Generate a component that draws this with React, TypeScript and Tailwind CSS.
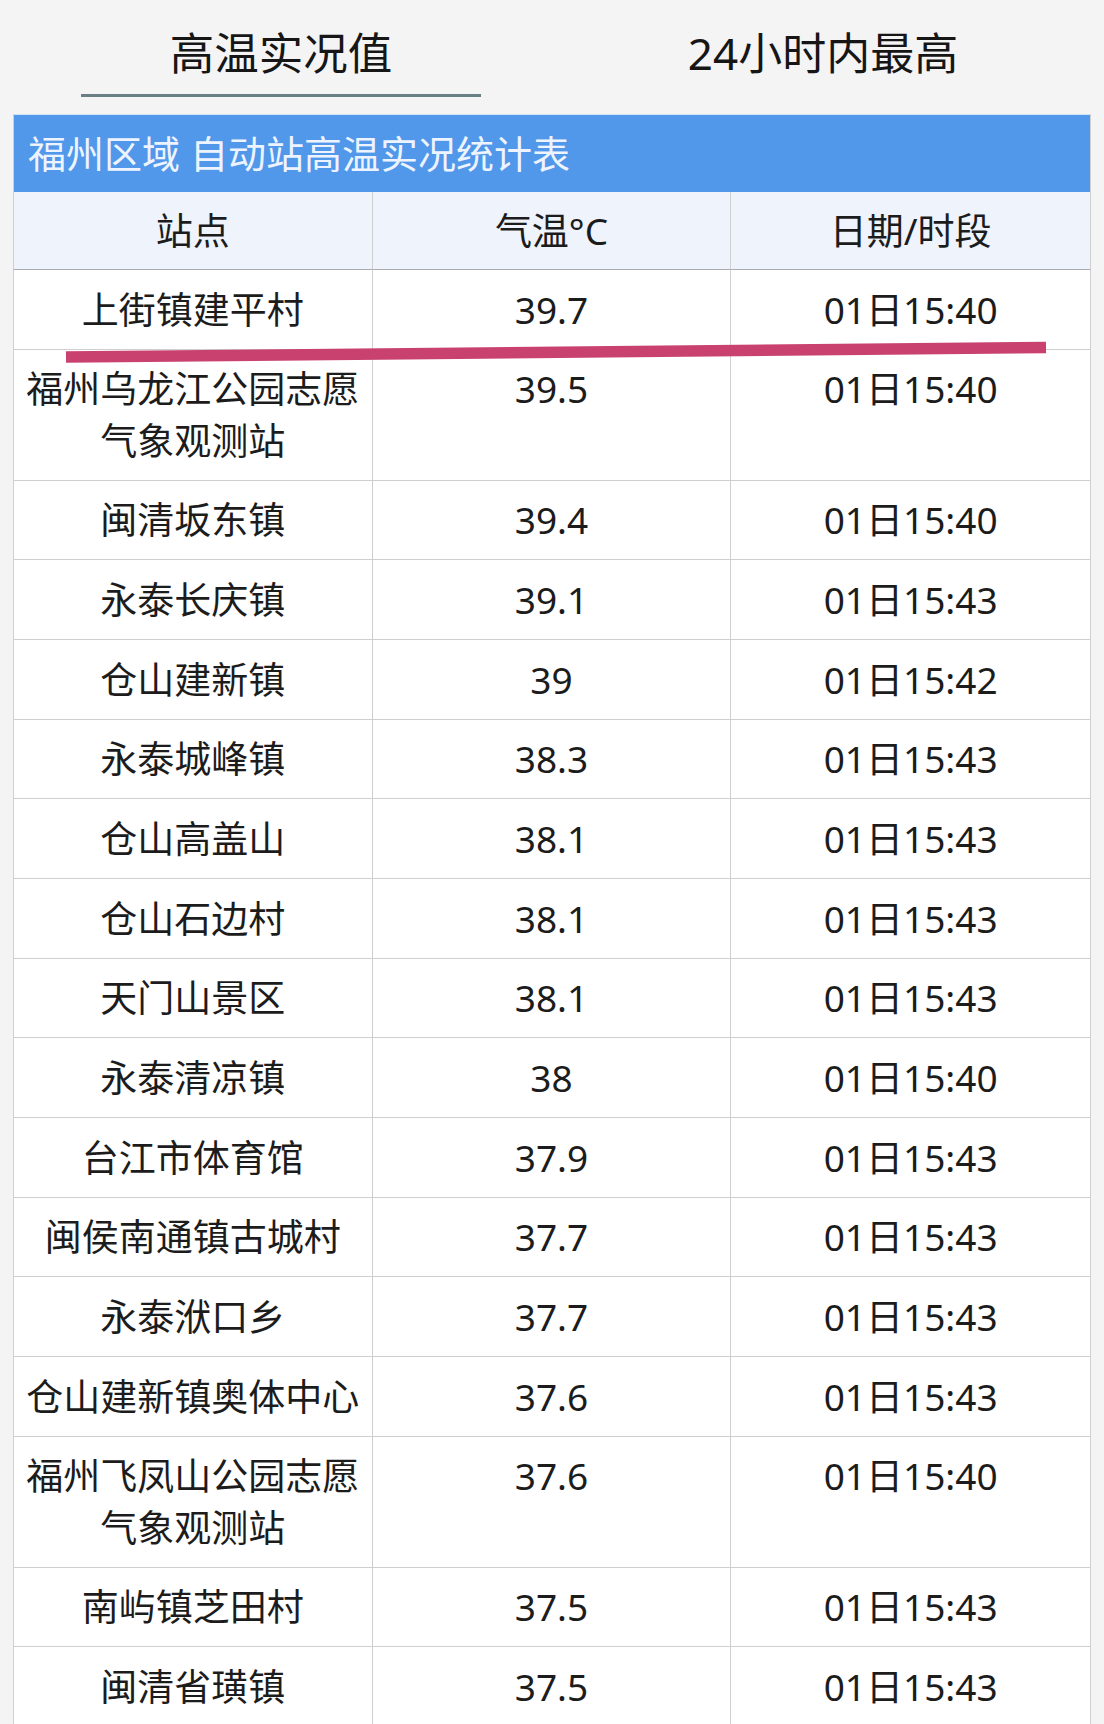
import React from 'react'

const rows: { name: string; temp: string; time: string }[] = [
  { name: '上街镇建平村', temp: '39.7', time: '01日15:40' },
  { name: '福州乌龙江公园志愿气象观测站', temp: '39.5', time: '01日15:40' },
  { name: '闽清坂东镇', temp: '39.4', time: '01日15:40' },
  { name: '永泰长庆镇', temp: '39.1', time: '01日15:43' },
  { name: '仓山建新镇', temp: '39', time: '01日15:42' },
  { name: '永泰城峰镇', temp: '38.3', time: '01日15:43' },
  { name: '仓山高盖山', temp: '38.1', time: '01日15:43' },
  { name: '仓山石边村', temp: '38.1', time: '01日15:43' },
  { name: '天门山景区', temp: '38.1', time: '01日15:43' },
  { name: '永泰清凉镇', temp: '38', time: '01日15:40' },
  { name: '台江市体育馆', temp: '37.9', time: '01日15:43' },
  { name: '闽侯南通镇古城村', temp: '37.7', time: '01日15:43' },
  { name: '永泰洑口乡', temp: '37.7', time: '01日15:43' },
  { name: '仓山建新镇奥体中心', temp: '37.6', time: '01日15:43' },
  { name: '福州飞凤山公园志愿气象观测站', temp: '37.6', time: '01日15:40' },
  { name: '南屿镇芝田村', temp: '37.5', time: '01日15:43' },
  { name: '闽清省璜镇', temp: '37.5', time: '01日15:43' },
]

const cell =
  'px-[8px] py-[13.7px] text-[37px] leading-[51.3px] text-center text-[#1c1c1c] border-b border-[#cfcfcf]'

export default function App() {
  return (
    <div
      className="relative min-h-screen bg-[#f4f4f5] overflow-hidden"
      style={{ fontFamily: '"Noto Sans", "Noto Sans CJK SC", sans-serif' }}
    >
      {/* tabs */}
      <div className="flex px-[10px]">
        <div className="flex-1 flex flex-col items-center pt-[31px]">
          <span className="text-[44.5px] leading-[44px] text-[#161616]">高温实况值</span>
          <div className="mt-[19px] h-[3px] w-[400px] bg-[#6a7e86]" />
        </div>
        <div className="flex-1 flex flex-col items-center pt-[31px]">
          <span className="text-[44px] leading-[44px] text-[#161616]">24小时内最高</span>
        </div>
      </div>

      {/* table */}
      <div className="mx-[13px] mt-[17px] border-x border-[#cfcfcf] bg-white">
        <div className="h-[78px] flex items-center px-[14px] bg-[#5198ea] border-t border-[#cfe4fb]">
          <span className="text-[38px] text-[#eef4ff]">福州区域 自动站高温实况统计表</span>
        </div>
        <div className="grid grid-cols-3">
          {['站点', '气温°C', '日期/时段'].map((h, i) => (
            <div
              key={h}
              className={`h-[78px] flex items-center justify-center bg-[#eef3fc] border-b border-[#a9abae] text-[37px] text-[#1c1c1c] ${
                i < 2 ? 'border-r border-r-[#cfcfcf]' : ''
              }`}
            >
              {h}
            </div>
          ))}
          {rows.map((r, idx) => (
            <React.Fragment key={idx}>
              <div className={`${cell} border-r`}>{r.name}</div>
              <div className={`${cell} border-r`}>{r.temp}</div>
              <div className={cell}>{r.time}</div>
            </React.Fragment>
          ))}
        </div>
      </div>

      {/* hand-drawn highlight */}
      <svg className="absolute left-0 top-0 pointer-events-none" width="1104" height="400">
        <line x1="66" y1="357" x2="1046" y2="347.5" stroke="#c9426f" strokeWidth="11.5" />
      </svg>
    </div>
  )
}
